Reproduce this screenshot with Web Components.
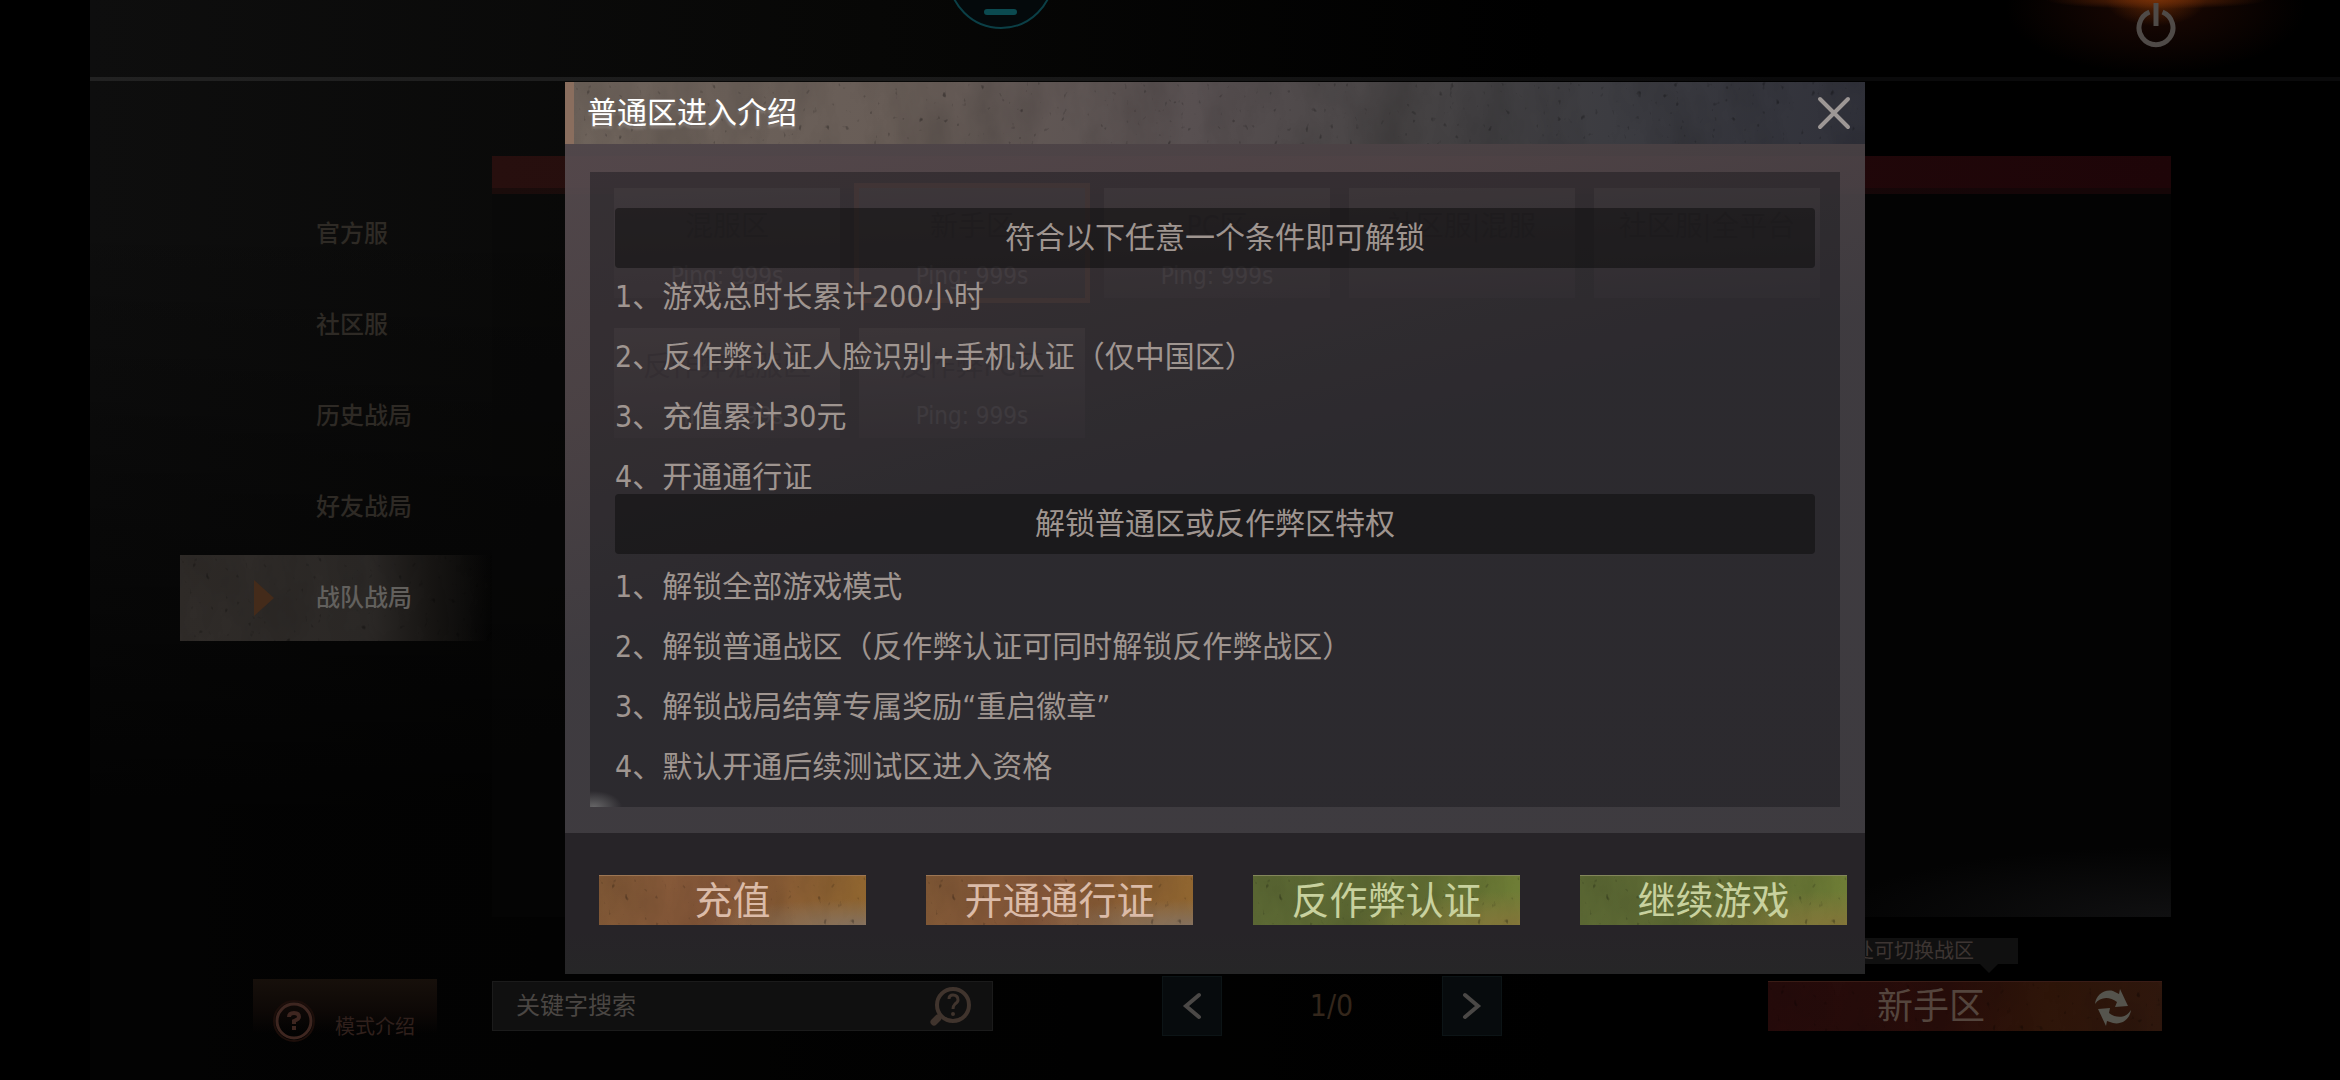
<!DOCTYPE html>
<html lang="zh-CN">
<head>
<meta charset="utf-8">
<title>普通区进入介绍</title>
<style>
body {
  margin: 0;
  background: #000;
  font-family: "DejaVu Sans Condensed", "Noto Sans CJK SC", sans-serif;
}
</style>
</head>
<body>
<game-lobby>
  <lobby-header slot="header"></lobby-header>

  <side-nav slot="nav">
    <nav-item>官方服</nav-item>
    <nav-item>社区服</nav-item>
    <nav-item>历史战局</nav-item>
    <nav-item>好友战局</nav-item>
    <nav-item selected>战队战局</nav-item>
  </side-nav>

  <server-list slot="content">
    <server-card ping="999s">混服区</server-card>
    <server-card ping="999s" selected>新手区</server-card>
    <server-card ping="999s">PC区</server-card>
    <server-card>社区服|混服</server-card>
    <server-card>社区服|全平台</server-card>
    <server-card ping="999s">反作弊混服区</server-card>
    <server-card ping="999s">反作弊PC区</server-card>
  </server-list>

  <mode-intro slot="intro">模式介绍</mode-intro>

  <search-box slot="footer" placeholder="关键字搜索"></search-box>
  <page-turner slot="footer">1/0</page-turner>
  <zone-button slot="footer" tip="此处可切换战区">新手区</zone-button>
</game-lobby>

<intro-dialog>
  <span slot="title">普通区进入介绍</span>
  <rule-section>
    <span slot="heading">符合以下任意一个条件即可解锁</span>
    <div>1、游戏总时长累计200小时</div>
    <div>2、反作弊认证人脸识别+手机认证（仅中国区）</div>
    <div>3、充值累计30元</div>
    <div>4、开通通行证</div>
  </rule-section>
  <rule-section>
    <span slot="heading">解锁普通区或反作弊区特权</span>
    <div>1、解锁全部游戏模式</div>
    <div>2、解锁普通战区（反作弊认证可同时解锁反作弊战区）</div>
    <div>3、解锁战局结算专属奖励“重启徽章”</div>
    <div>4、默认开通后续测试区进入资格</div>
  </rule-section>
  <action-button slot="actions" tone="orange">充值</action-button>
  <action-button slot="actions" tone="orange">开通通行证</action-button>
  <action-button slot="actions" tone="green">反作弊认证</action-button>
  <action-button slot="actions" tone="green">继续游戏</action-button>
</intro-dialog>

<script>
const define = (name, html, setup) => {
  const template = document.createElement("template");
  template.innerHTML = html;
  customElements.define(
    name,
    class extends HTMLElement {
      connectedCallback() {
        if (this.shadowRoot) return;
        const shadowRoot = this.attachShadow({ mode: "open" });
        shadowRoot.appendChild(template.content.cloneNode(true));
        if (setup) setup(this, shadowRoot);
      }
    }
  );
};

// speckled concrete layer, sits behind the content of its positioned parent
define("grunge-fill", `
<style>
:host {
  position: absolute;
  inset: 0;
  z-index: -1;
  overflow: hidden;
}
svg {
  display: block;
  width: 100%;
  height: 100%;
}
</style>
<svg aria-hidden="true">
  <filter id="cloud" x="0" y="0" width="100%" height="100%">
    <feTurbulence type="fractalNoise" baseFrequency="0.02 0.01" numOctaves="5" seed="7"/>
    <feColorMatrix values="0 0 0 0 0  0 0 0 0 0  0 0 0 0 0  0.8 0 0 0 -0.3"/>
  </filter>
  <filter id="speck" x="0" y="0" width="100%" height="100%">
    <feTurbulence type="fractalNoise" baseFrequency="0.16 0.12" numOctaves="2" seed="12"/>
    <feColorMatrix values="0 0 0 0 0  0 0 0 0 0  0 0 0 0 0  6 0 0 0 -4.3"/>
  </filter>
  <rect width="100%" height="100%" filter="url(#cloud)" opacity="0.3"/>
  <rect width="100%" height="100%" filter="url(#speck)" opacity="0.3"/>
</svg>
`);

define("game-lobby", `
<style>
:host {
  display: grid;
  box-sizing: border-box;
  min-height: 100vh;
  margin-left: 90px;
  grid-template-columns: 402px 1fr 169px;
  grid-template-rows: auto 1fr auto;
  background:
    linear-gradient(rgba(0, 0, 0, 0) 20%, rgba(0, 0, 0, 0.8) 75%),
    linear-gradient(90deg, #0e0e0e, #070706 35%, #000 65%);
}
.header {
  grid-column: 1 / -1;
}
.content {
  display: grid;
  padding-top: 75px;
}
.intro {
  grid-column: 1;
  grid-row: 3;
  padding: 62px 55px 0 163px;
}
.footer {
  display: grid;
  grid-row: 3;
  grid-template-columns: 1fr auto 1fr;
  align-items: center;
  padding: 59px 0 44px;
}
</style>
<div class="header"><slot name="header"></slot></div>
<slot name="nav"></slot>
<div class="content"><slot name="content"></slot></div>
<div class="intro"><slot name="intro"></slot></div>
<div class="footer"><slot name="footer"></slot></div>
`);

define("lobby-header", `
<style>
:host {
  display: flex;
  justify-content: space-between;
  height: 77px;
  overflow: hidden;
  border-bottom: 4px solid;
  border-image: linear-gradient(90deg, #222, #1a1a1a 40%, #0a0a0b 75%) 1;
}
.badge {
  width: 108px;
  height: 30px;
  margin-left: 857px;
}
button {
  display: flex;
  justify-content: center;
  align-items: flex-start;
  width: 368px;
  padding: 2px 0 0;
  border: 0;
  background:
    radial-gradient(110px 9px at 50% 0, rgba(124, 50, 8, 0.75), transparent),
    radial-gradient(50px 26px at 50% 0, #5c2604, transparent),
    radial-gradient(150px 66px at 50% 8px, #1c0803, transparent);
}
</style>
<svg class="badge" viewBox="0 0 108 30" aria-hidden="true">
  <circle cx="54" cy="-24" r="52" fill="#04090b" stroke="#0b3f46" stroke-width="2"/>
  <rect x="37" y="9" width="33" height="6" rx="3" fill="#0b4a50"/>
</svg>
<button aria-label="退出">
  <svg width="40" height="46" viewBox="0 0 40 46" fill="none" stroke="#4f4a47" stroke-width="5">
    <path d="M13.500 10A17 17 0 1 0 26.500 10"/>
    <path d="M20 1V24"/>
  </svg>
</button>
`);

define("side-nav", `
<style>
:host {
  display: block;
}
nav {
  display: flex;
  flex-direction: column;
  gap: 5px;
  padding: 110px 0 0 90px;
}
</style>
<nav><slot></slot></nav>
`);

define("nav-item", `
<style>
:host {
  display: block;
}
a {
  position: relative;
  display: flex;
  align-items: center;
  height: 86px;
  isolation: isolate;
  color: #2e2a25;
  font-size: 24px;
  font-weight: 500;
  line-height: 32px;
  text-decoration: none;
}
.mark {
  width: 62px;
  padding-left: 74px;
}
.mark svg,
grunge-fill {
  display: none;
}
:host([selected]) a {
  background: linear-gradient(90deg, #302c29, #2c2927 60%, #181614 80%, transparent);
  color: #62605d;
}
:host([selected]) svg,
:host([selected]) grunge-fill {
  display: block;
}
</style>
<a href="#">
  <grunge-fill></grunge-fill>
  <span class="mark"><svg width="20" height="36" viewBox="0 0 20 36"><path d="M0 0L20 18L0 36Z" fill="#442b1a"/></svg></span>
  <slot></slot>
</a>
`);

define("server-list", `
<style>
:host {
  display: flex;
  flex-direction: column;
}
.bar {
  height: 38px;
  background: linear-gradient(90deg, #270f0e, #1e0508);
}
.list {
  display: grid;
  flex: 1;
  grid-template-columns: repeat(auto-fill, 226px);
  grid-auto-rows: 110px;
  gap: 30px 19px;
  margin-top: -6px;
  padding: 0 122px;
  background:
    radial-gradient(340px 70px at 100% 100%, #101011, transparent),
    rgba(8, 8, 8, 0.4);
}
</style>
<div class="bar"></div>
<div class="list"><slot></slot></div>
`);

define("server-card", `
<style>
:host {
  display: flex;
  flex-direction: column;
  align-items: center;
  box-sizing: border-box;
  padding-top: 20px;
  background: linear-gradient(#96887e, #5c5351 55%, #302b2a);
  color: #141012;
  font-size: 28px;
  line-height: 38px;
}
:host([selected]) {
  outline: 5px solid #d0622c;
}
.ping {
  padding-top: 14px;
  color: #fff6fa;
  font-size: 24px;
  line-height: 32px;
}
</style>
<slot></slot>
<div class="ping"></div>
`, (el, shadowRoot) => {
  const ping = el.getAttribute("ping");
  if (ping) shadowRoot.querySelector(".ping").textContent = `Ping: ${ping}`;
});

define("mode-intro", `
<style>
:host {
  display: block;
}
button {
  display: flex;
  align-items: center;
  gap: 20px;
  width: 100%;
  height: 72px;
  padding: 12px 0 0 20px;
  border: 0;
  background: linear-gradient(#17100b, #0d0806 45%, transparent 75%);
  color: #30201c;
  font-family: inherit;
  font-size: 20px;
  line-height: 28px;
}
.label {
  padding-top: 12px;
}
</style>
<button>
  <svg width="42" height="42" viewBox="0 0 42 42" fill="none" stroke="#3e2620">
    <circle cx="21" cy="21" r="20" stroke="#1c0e0a" stroke-width="2"/>
    <circle cx="21" cy="21" r="17" stroke-width="3"/>
    <path d="M16 17Q16 13 21 13Q26 13 26 17Q26 19 21 21V24" stroke-width="4"/>
    <path d="M19 28H23" stroke-width="4"/>
  </svg>
  <span class="label"><slot></slot></span>
</button>
`);

define("search-box", `
<style>
:host {
  display: block;
}
label {
  display: flex;
  align-items: center;
  box-sizing: border-box;
  width: 501px;
  max-width: 100%;
  height: 50px;
  padding: 0 21px 0 23px;
  border: 1px solid #1b1b1b;
  background: #101010;
}
input {
  flex: 1;
  min-width: 0;
  padding: 0;
  border: 0;
  outline: 0;
  background: none;
  color: #4a4643;
  font-family: inherit;
  font-size: 24px;
}
input::placeholder {
  color: #4a4643;
}
</style>
<label>
  <input type="search" aria-label="搜索">
  <svg width="42" height="42" viewBox="0 0 42 42" fill="none" stroke="#40342d">
    <circle cx="24" cy="20" r="16" stroke-width="4"/>
    <path d="M9 33L5 37" stroke-width="7" stroke-linecap="round"/>
    <path d="M20 14Q20 10 24 10Q29 10 29 15Q29 17 26 19Q24 21 24 24" stroke-width="3"/>
    <circle cx="24" cy="29" r="1" stroke-width="2"/>
  </svg>
</label>
`, (el, shadowRoot) => {
  shadowRoot.querySelector("input").placeholder = el.getAttribute("placeholder");
});

define("page-turner", `
<style>
:host {
  display: flex;
  align-items: center;
  width: 340px;
  color: #33261b;
  font-size: 30px;
  line-height: 40px;
}
button {
  display: grid;
  place-items: center;
  width: 60px;
  height: 60px;
  padding: 0;
  border: 1px solid #0c1416;
  background: #070b0d;
}
span {
  flex: 1;
  text-align: center;
}
</style>
<button aria-label="上一页"><svg width="20" height="28" viewBox="0 0 20 28" fill="none" stroke="#4a4846" stroke-width="4" stroke-linecap="round"><path d="M17 3L4 14L17 25"/></svg></button>
<span><slot></slot></span>
<button aria-label="下一页"><svg width="20" height="28" viewBox="0 0 20 28" fill="none" stroke="#4a4846" stroke-width="4" stroke-linecap="round"><path d="M3 3L16 14L3 25"/></svg></button>
`);

define("zone-button", `
<style>
:host {
  position: relative;
  display: block;
  justify-self: end;
  width: 394px;
  margin-right: 9px;
}
button {
  position: relative;
  display: flex;
  align-items: center;
  justify-content: space-between;
  width: 100%;
  height: 50px;
  padding: 0 30px 0 109px;
  border: 0;
  border-top: 1px solid #3a1c16;
  isolation: isolate;
  background: linear-gradient(100deg, #260b0b, #280d0a 45%, #2e1509 70%, #30180e);
  color: #54453d;
  font-family: inherit;
  font-size: 36px;
  line-height: 48px;
}
/* callout floating above the button */
.tip {
  position: absolute;
  right: 144px;
  bottom: 67px;
  padding: 0 44px;
  background: #101010;
  color: #3d3532;
  font-size: 20px;
  line-height: 26px;
  white-space: nowrap;
}
.tip::after {
  content: "";
  position: absolute;
  top: 100%;
  right: 20px;
  border: 9px solid transparent;
  border-bottom: 0;
  border-top-color: #101010;
}
</style>
<div class="tip"></div>
<button>
  <grunge-fill></grunge-fill>
  <slot></slot>
  <svg width="38" height="38" viewBox="0 0 38 38" fill="#55544d">
    <path d="M1 16C2 7 10 1 19 3L25 6L26 1L34 18L21 19L23 14C15 8 6 9 1 16Z"/>
    <path d="M37 22C36 31 28 37 19 35L13 33L12 38L4 21L16 20L15 25C23 31 32 30 37 22Z"/>
  </svg>
</button>
`, (el, shadowRoot) => {
  shadowRoot.querySelector(".tip").textContent = el.getAttribute("tip");
});

define("intro-dialog", `
<style>
:host {
  position: absolute;
  inset: 0;
  display: flex;
  justify-content: center;
  align-items: flex-start;
  padding: 82px 0 0 90px;
}
section {
  width: 90%;
  max-width: 1300px;
}
header {
  position: relative;
  display: flex;
  align-items: center;
  justify-content: space-between;
  box-sizing: border-box;
  height: 62px;
  padding: 0 11px 0 13px;
  border-left: 9px solid #8a6e5e;
  isolation: isolate;
  background: linear-gradient(100deg, #6e635b, #685d57 25%, #585051 48%, #464344 65%, #3c3c41 80%, #30313a);
}
h1 {
  margin: 0;
  color: #fff;
  font-size: 30px;
  font-weight: 400;
  line-height: 40px;
  text-shadow: 0 3px 3px rgba(255, 255, 255, 0.2);
}
header button {
  padding: 0;
  border: 0;
  background: none;
}
header svg {
  display: block;
}
.body {
  padding: 28px 25px 26px;
  background: linear-gradient(165deg, rgba(88, 77, 81, 0.9), rgba(82, 72, 75, 0.9) 25%, rgba(69, 65, 70, 0.9) 50%, rgba(68, 65, 70, 0.9));
}
.panel {
  padding: 36px 25px 23px;
  background:
    radial-gradient(28px 16px at 4px 100%, rgba(140, 140, 140, 0.6), transparent),
    rgba(20, 20, 24, 0.42);
}
footer {
  display: flex;
  justify-content: space-between;
  padding: 42px 18px 49px 34px;
  background: linear-gradient(#272428 70%, #262627);
}
</style>
<section role="dialog" aria-labelledby="title">
  <header>
    <grunge-fill></grunge-fill>
    <h1 id="title"><slot name="title"></slot></h1>
    <button aria-label="关闭">
      <svg width="40" height="40" viewBox="0 0 40 40" stroke="#9d9795" stroke-width="4" stroke-linecap="round">
        <path d="M6 6L34 34M34 6L6 34"/>
      </svg>
    </button>
  </header>
  <div class="body"><div class="panel"><slot></slot></div></div>
  <footer><slot name="actions"></slot></footer>
</section>
`);

define("rule-section", `
<style>
:host {
  display: block;
  color: #9f9590;
  font-size: 30px;
  line-height: 34px;
}
h2 {
  margin: 0;
  border-radius: 4px;
  background: rgba(10, 9, 10, 0.5);
  font-size: 30px;
  font-weight: 400;
  line-height: 60px;
  text-align: center;
}
.rules {
  display: grid;
  grid-auto-rows: 34px;
  gap: 26px;
  padding-top: 12px;
}
:host(:last-of-type) .rules {
  padding-top: 16px;
}
</style>
<h2><slot name="heading"></slot></h2>
<div class="rules"><slot></slot></div>
`);

define("action-button", `
<style>
:host {
  display: block;
  width: 267px;
}
button {
  position: relative;
  display: block;
  width: 100%;
  height: 50px;
  padding: 0;
  border: 0;
  border-top: 1px solid #9c7654;
  isolation: isolate;
  background:
    radial-gradient(170px 26px at 100% 100%, #86725f, transparent),
    linear-gradient(100deg, #835a37, #87583a 45%, #90662f);
  color: #dbbba8;
  font-family: inherit;
  font-size: 38px;
  line-height: 46px;
}
:host([tone="green"]) button {
  border-top-color: #83865c;
  background:
    radial-gradient(170px 34px at 100% 100%, #84763a, transparent),
    linear-gradient(100deg, #5d6a35, #5f6b34 45%, #6f7e36);
  color: #c8d19e;
}
</style>
<button><grunge-fill></grunge-fill><slot></slot></button>
`);
</script>
</body>
</html>
